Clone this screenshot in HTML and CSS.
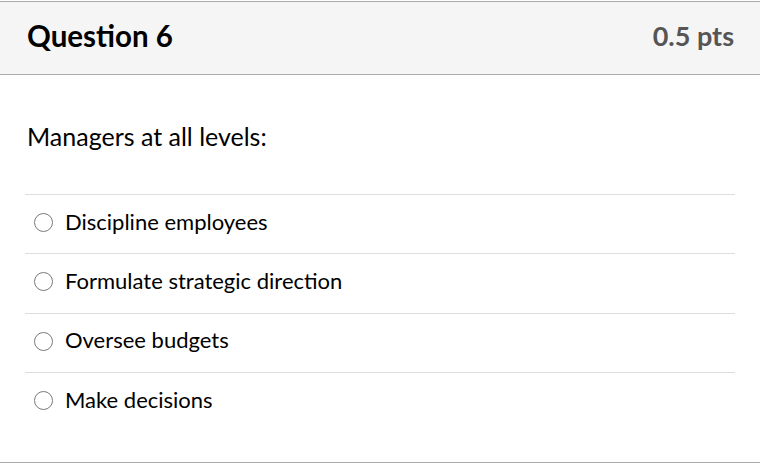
FILE: index.html
```html
<!DOCTYPE html>
<html>
<head>
<meta charset="utf-8">
<link rel="stylesheet" href="styles.css">
</head>
<body>
<div class="question">
  <div class="header">
    <h2 class="title">Question 6</h2>
    <div class="points">0.5 pts</div>
  </div>
  <div class="content">
    <p class="prompt">Managers at all levels:</p>
    <div class="answers">
      <div class="answer"><span class="radio"></span><span class="label">Discipline employees</span></div>
      <div class="answer"><span class="radio"></span><span class="label">Formulate strategic direction</span></div>
      <div class="answer"><span class="radio"></span><span class="label">Oversee budgets</span></div>
      <div class="answer"><span class="radio"></span><span class="label">Make decisions</span></div>
    </div>
  </div>
</div>
</body>
</html>
```
FILE: styles.css
```css
html, body {
  margin: 0;
  padding: 0;
  background: #fff;
}
body {
  padding-top: 1px;
  font-family: Lato, "Open Sans", sans-serif;
  color: #2d3b45;
}
.question {
  border-top: 1px solid #aaaaaa;
  border-bottom: 1px solid #aaaaaa;
  height: 462px;
  box-sizing: border-box;
}
.header {
  height: 73px;
  box-sizing: border-box;
  background: #f5f5f5;
  border-bottom: 1px solid #aaaaaa;
  display: flex;
  align-items: center;
  justify-content: space-between;
  padding: 0 26px 6px 27px;
}
.title {
  margin: 0;
  font-size: 29.5px;
  font-weight: 700;
  color: #000;
}
.points {
  font-size: 27px;
  font-weight: 700;
  color: #555;
}
.content {
  padding: 0 25px;
}
.prompt {
  margin: 0;
  padding: 46px 0 0 2px;
  height: 119px;
  box-sizing: border-box;
  font-size: 25px;
  line-height: 30px;
  color: #000;
}
.answer {
  display: flex;
  align-items: center;
  height: 59.33px;
  box-sizing: border-box;
  border-top: 1px solid #dddddd;
  padding: 0 0 6px 9px;
}
.radio {
  width: 19px;
  height: 19px;
  box-sizing: border-box;
  border: 1px solid #7a7a7a;
  border-radius: 50%;
  margin-right: 12px;
  margin-top: 3px;
  flex: none;
}
.label {
  font-size: 22px;
  color: #000;
}
```
